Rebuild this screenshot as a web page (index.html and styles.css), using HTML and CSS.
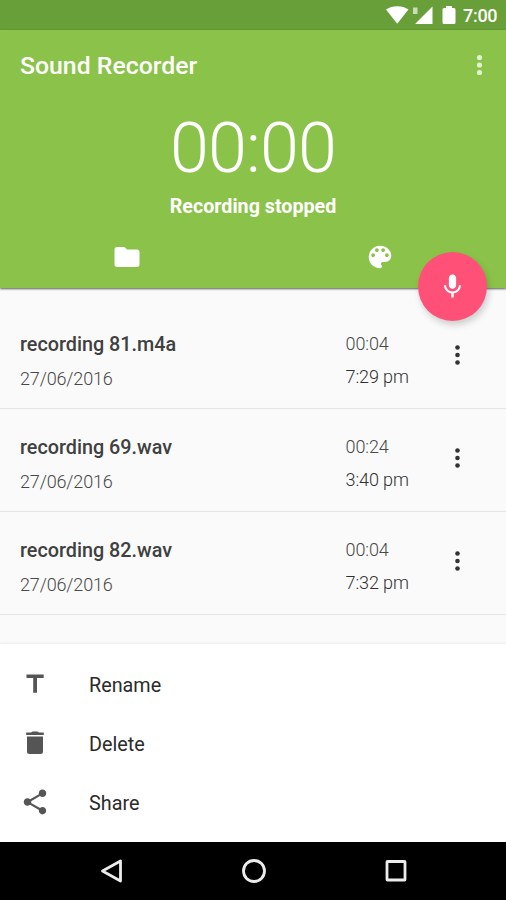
FILE: index.html
```html
<!DOCTYPE html>
<html lang="en">
<head>
<meta charset="utf-8">
<title>Sound Recorder</title>
<link rel="stylesheet" href="styles.css">
</head>
<body>
<div class="screen">
  <div class="status-bar">
    <svg class="status-icons" viewBox="0 0 72 30">
      <path d="M0 9.5C6 5 16.500 5 22.500 9.500L11.200 23.800Z"/>
      <path d="M29.500 24V23.500L46.500 6.500V24Z"/>
      <path class="faded" d="M27 7.500h4.500V14H27z"/>
      <path d="M58 8h2V6h6v2h2q1.500 0 1.500 1.500v13q0 1.500-1.500 1.500H58q-1.500 0-1.500-1.500v-13Q56.500 8 58 8z"/>
    </svg>
    <span class="clock">7:00</span>
  </div>
  <header class="header">
    <div class="app-bar">
      <h1 class="title">Sound Recorder</h1>
      <svg class="more more-light" viewBox="0 0 8 24"><circle cx="3.500" cy="3.500" r="2.600"/><circle cx="3.500" cy="11" r="2.600"/><circle cx="3.500" cy="18.500" r="2.600"/></svg>
    </div>
    <div class="timer">00:00</div>
    <div class="state">Recording stopped</div>
    <div class="tabs">
      <div class="tab"><svg class="tab-icon" viewBox="0 0 24 24"><path d="M10 4H4c-1.100 0-1.990.9-1.990 2L2 18c0 1.100.9 2 2 2h16c1.100 0 2-.9 2-2V8c0-1.100-.9-2-2-2h-8l-2-2z"/></svg></div>
      <div class="tab"><svg class="tab-icon" viewBox="0 0 24 24"><path d="M12 3c-4.970 0-9 4.030-9 9s4.030 9 9 9c.83 0 1.500-.67 1.500-1.500 0-.39-.15-.74-.39-1.010-.23-.26-.38-.61-.38-.99 0-.83.67-1.500 1.500-1.500H16c2.760 0 5-2.240 5-5 0-4.420-4.030-8-9-8zm-5.500 9c-.83 0-1.500-.67-1.500-1.500S5.670 9 6.500 9 8 9.670 8 10.500 7.330 12 6.500 12zm3-4C8.670 8 8 7.330 8 6.500S8.670 5 9.500 5s1.500.67 1.500 1.500S10.330 8 9.500 8zm5 0c-.83 0-1.500-.67-1.500-1.500S13.670 5 14.500 5s1.500.67 1.500 1.500S15.330 8 14.500 8zm3 4c-.83 0-1.500-.67-1.500-1.500S16.670 9 17.500 9s1.500.67 1.500 1.500-.67 1.500-1.500 1.500z"/></svg></div>
    </div>
    <button class="fab" aria-label="Record"><svg class="fab-icon" viewBox="0 0 24 24"><path d="M12 14c1.660 0 2.990-1.340 2.990-3L15 5c0-1.660-1.340-3-3-3S9 3.340 9 5v6c0 1.660 1.340 3 3 3zm5.300-3c0 3-2.540 5.100-5.300 5.100S6.700 14 6.700 11H5c0 3.410 2.720 6.230 6 6.720V21h2v-3.280c3.280-.48 6-3.300 6-6.720h-1.700z"/></svg></button>
  </header>
  <main class="list">
    <article class="row">
      <div class="info"><h2 class="name">recording 81.m4a</h2><p class="date">27/06/2016</p></div>
      <div class="times"><p class="length">00:04</p><p class="hour">7:29 pm</p></div>
      <svg class="more" viewBox="0 0 8 24"><circle cx="3.500" cy="4.500" r="2.300"/><circle cx="3.500" cy="12" r="2.300"/><circle cx="3.500" cy="19.500" r="2.300"/></svg>
    </article>
    <article class="row">
      <div class="info"><h2 class="name">recording 69.wav</h2><p class="date">27/06/2016</p></div>
      <div class="times"><p class="length">00:24</p><p class="hour">3:40 pm</p></div>
      <svg class="more" viewBox="0 0 8 24"><circle cx="3.500" cy="4.500" r="2.300"/><circle cx="3.500" cy="12" r="2.300"/><circle cx="3.500" cy="19.500" r="2.300"/></svg>
    </article>
    <article class="row">
      <div class="info"><h2 class="name">recording 82.wav</h2><p class="date">27/06/2016</p></div>
      <div class="times"><p class="length">00:04</p><p class="hour">7:32 pm</p></div>
      <svg class="more" viewBox="0 0 8 24"><circle cx="3.500" cy="4.500" r="2.300"/><circle cx="3.500" cy="12" r="2.300"/><circle cx="3.500" cy="19.500" r="2.300"/></svg>
    </article>
  </main>
  <section class="sheet">
    <div class="action"><svg class="action-icon" viewBox="0 0 30 30"><path d="M6.500 4.500h17.200v3.600h-6.700V22.800h-3.800V8.100H6.500z"/></svg><span class="action-label">Rename</span></div>
    <div class="action"><svg class="action-icon" viewBox="0 0 30 30"><path d="M7 7.500h16v15q0 2.500-2.500 2.500h-11Q7 25 7 22.500zM6.200 3.500H11L12.500 2.500h5L19 3.500h4.800V6H6.200z"/></svg><span class="action-label">Delete</span></div>
    <div class="action"><svg class="action-icon action-icon-share" viewBox="0 0 24 24"><path d="M18 16.080c-.76 0-1.440.3-1.960.77L8.910 12.700c.05-.23.09-.46.09-.7s-.04-.47-.09-.7l7.050-4.110c.54.5 1.250.81 2.040.81 1.660 0 3-1.340 3-3s-1.340-3-3-3-3 1.340-3 3c0 .24.04.47.09.7L8.040 9.810C7.500 9.310 6.790 9 6 9c-1.660 0-3 1.340-3 3s1.340 3 3 3c.79 0 1.500-.31 2.040-.81l7.120 4.160c-.05.21-.08.43-.08.65 0 1.610 1.310 2.920 2.920 2.920 1.610 0 2.920-1.310 2.920-2.920s-1.310-2.920-2.920-2.920z"/></svg><span class="action-label">Share</span></div>
  </section>
  <nav class="nav-bar">
    <svg class="nav-icon" viewBox="0 0 28 28"><path d="M22.500 4V24L4.500 14Z"/></svg>
    <svg class="nav-icon" viewBox="0 0 28 28"><circle cx="14" cy="14" r="10.500"/></svg>
    <svg class="nav-icon" viewBox="0 0 28 28"><rect x="5" y="4.500" width="18" height="18.500" rx=".5"/></svg>
  </nav>
</div>
</body>
</html>
```
FILE: styles.css
```css
* { box-sizing: border-box; margin: 0; padding: 0; }
body { font-family: Roboto, "Liberation Sans", sans-serif; background: #fafafa; }
svg { display: block; flex: none; }
.screen { width: 506px; height: 900px; display: flex; flex-direction: column; overflow: hidden; background: #fafafa; }

.status-bar { height: 30px; flex: none; background: #689f38; display: flex; justify-content: flex-end; align-items: center; padding-right: 10px; color: #fff; }
.status-icons { width: 72px; height: 30px; fill: #fff; margin-right: 5px; }
.faded { opacity: .65; }
.clock { font-size: 18px; font-weight: 500; line-height: 30px; width: 33px; letter-spacing: -.3px; white-space: nowrap; padding-top: 2px; }

.header { position: relative; height: 258px; flex: none; background: #8bc34a; color: #fff; box-shadow: 0 1px 2px rgba(0, 0, 0, .65); }
.app-bar { height: 71px; display: flex; align-items: center; justify-content: space-between; padding: 0 22px 0 20px; }
.title { font-size: 24.800px; font-weight: 500; line-height: 30px; padding-top: 1px; }
.timer { height: 92px; line-height: 95px; font-size: 70px; font-weight: 300; letter-spacing: -.8px; text-align: center; }
.state { height: 24px; line-height: 27px; font-size: 19.700px; font-weight: 700; text-align: center; }
.tabs { height: 71px; display: flex; }
.tab { flex: 1; display: flex; justify-content: center; padding-top: 25px; }
.tab-icon { width: 30px; height: 30px; fill: #fff; }
.fab { position: absolute; right: 19px; bottom: -33px; width: 69px; height: 69px; border: 0; border-radius: 50%; background: #ff5177; box-shadow: 2px 4px 7px rgba(0, 0, 0, .18); display: flex; align-items: center; justify-content: center; }
.fab-icon { width: 29px; height: 29px; fill: #fff; }

.more { width: 8px; height: 24px; fill: #333; }
.more-light { fill: #e4f2d4; }

.list { flex: 1; padding-top: 18px; }
.row { height: 103px; display: flex; border-bottom: 1px solid #e6e6e6; padding: 26px 44px 0 20px; }
.info { width: 325.500px; }
.name { font-size: 19.800px; font-weight: 500; height: 24px; line-height: 26px; color: #404040; }
.date { font-size: 18px; font-weight: 300; letter-spacing: -.15px; line-height: 24px; margin-top: 11px; color: #484848; }
.times { flex: 1; font-size: 18px; font-weight: 300; letter-spacing: -.1px; line-height: 24px; color: #484848; }
.hour { margin-top: 9px; color: #303030; }
.row .more { margin-top: 11px; }

.sheet { height: 198px; flex: none; background: #fff; padding-top: 11px; box-shadow: 0 0 3px rgba(0, 0, 0, .12); }
.action { height: 59px; display: flex; align-items: center; padding-left: 20px; font-size: 19.800px; color: #2b2b2b; }
.action-icon { width: 30px; height: 30px; fill: #555; margin-right: 39px; }
.action-icon-share { margin-bottom: 2px; }
.action-label { padding-top: 2px; }

.nav-bar { height: 58px; flex: none; background: #000; display: flex; justify-content: space-between; align-items: center; padding: 0 96px 0 98px; }
.nav-icon { width: 28px; height: 28px; fill: none; stroke: #ececec; stroke-width: 2.800; stroke-linejoin: round; }
```
